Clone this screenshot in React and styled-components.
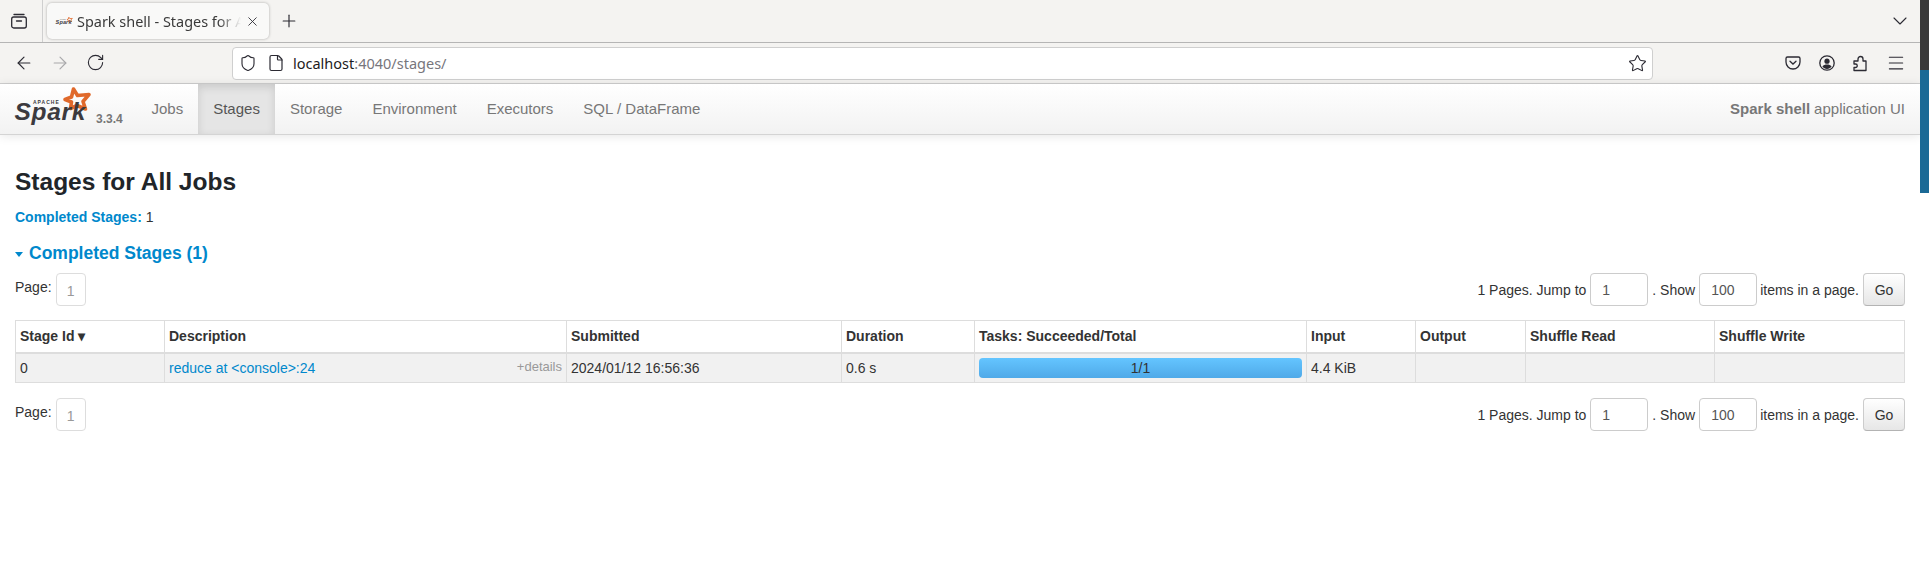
import React from 'react'
import styled, { createGlobalStyle } from 'styled-components'
import {
  ArrowLeft,
  ArrowRight,
  ChevronDown,
  File,
  Menu,
  Plus,
  RotateCw,
  Shield,
  Star,
  X
} from 'lucide-react'

const GlobalStyle = createGlobalStyle`
  html, body {
    margin: 0;
    height: 578px;
    overflow: hidden;
    background: #fff;
  }
  * { box-sizing: border-box; }
`

const Desktop = styled.div`
  display: flex;
  width: 1929px;
  height: 578px;
`

const Browser = styled.div`
  width: 1920px;
  display: flex;
  flex-direction: column;
  color: #2b2a33;
`

const SideStrip = styled.div`
  width: 9px;
  height: 193px;
  background: linear-gradient(to bottom, #3a3a3a 0, #3a3a3a 70px, #1b6a96 70px);
`

const TabStrip = styled.div`
  height: 43px;
  background: #f4f3f1;
  border-bottom: 1px solid #b5b5b5;
  display: flex;
  align-items: center;
`

const ViewButton = styled.div`
  width: 43px;
  height: 42px;
  border-right: 1px solid #cfcfcf;
  display: flex;
  align-items: center;
  justify-content: center;
  padding-right: 4px;
`

const BrowserTab = styled.div`
  width: 222px;
  height: 36px;
  margin-left: 4px;
  padding: 0 9px 0 8px;
  background: #f9f9f8;
  border-radius: 5px;
  box-shadow: 0 0 3px rgba(0, 0, 0, 0.3);
  display: flex;
  align-items: center;
  gap: 4px;
`

const TabTitle = styled.span`
  font: 14.45px 'Noto Sans', sans-serif;
  white-space: nowrap;
  overflow: hidden;
  flex: 1;
  color: #3a3a3a;
  -webkit-mask-image: linear-gradient(to right, #000 86%, transparent 100%);
  mask-image: linear-gradient(to right, #000 86%, transparent 100%);
`

const NewTab = styled.div`
  margin-left: 10px;
  display: flex;
`

const TabSpacer = styled.div`
  flex: 1;
`

const Overflow = styled.div`
  display: flex;
  margin-right: 8px;
`

const Toolbar = styled.div`
  height: 41px;
  background: #f4f3f1;
  border-bottom: 1px solid #cfcfcf;
  display: flex;
  align-items: center;
`

const NavButtons = styled.div`
  width: 232px;
  padding-left: 14px;
  display: flex;
  gap: 16px;
`

const UrlBar = styled.div`
  width: 1421px;
  height: 33px;
  background: #fff;
  border: 1px solid #cfcfcf;
  border-radius: 4px;
  display: flex;
  align-items: center;
  padding: 0 5px 0 6px;
`

const UrlIcons = styled.div`
  display: flex;
  gap: 10px;
  margin-right: 8px;
`

const UrlText = styled.span`
  flex: 1;
  font: 14.5px 'Noto Sans', sans-serif;
  color: #1c1b22;

  & em {
    font-style: normal;
    color: #77767c;
  }
`

const ToolIcons = styled.div`
  flex: 1;
  display: flex;
  justify-content: flex-end;
  align-items: center;
  gap: 18px;
  padding-right: 14px;
`

const Navbar = styled.div`
  height: 51px;
  background: linear-gradient(to bottom, #fff, #f2f2f2);
  border-bottom: 1px solid #d4d4d4;
  box-shadow: 0 1px 10px rgba(0, 0, 0, 0.1);
  display: flex;
  align-items: stretch;
  font: 15px 'Liberation Sans', Arial, sans-serif;
  color: #777;
`

const Brand = styled.div`
  width: 136.5px;
  position: relative;
  flex: none;
`

const Version = styled.span`
  position: absolute;
  left: 96px;
  top: 28px;
  font: bold 12px 'Liberation Sans', Arial, sans-serif;
  color: #777;
`

const NavItem = styled.div`
  padding: 0 15px 2px;
  display: flex;
  align-items: center;
  background: ${({ $active }) => ($active ? '#e5e5e5' : 'transparent')};
  color: ${({ $active }) => ($active ? '#555' : '#777')};
  box-shadow: ${({ $active }) =>
    $active ? 'inset 0 3px 8px rgba(0, 0, 0, 0.125)' : 'none'};
`

const AppName = styled.div`
  margin-left: auto;
  padding-right: 15px;
  padding-bottom: 2px;
  display: flex;
  align-items: center;
  gap: 4px;

  & b {
    font-weight: bold;
  }
`

const Content = styled.div`
  padding: 0 15px;
  font: 14px/20px 'Liberation Sans', Arial, sans-serif;
  color: #333;
`

const Title = styled.h3`
  margin: 32px 0 0;
  font: bold 24.5px/30px 'Liberation Sans', Arial, sans-serif;
  color: #212529;
`

const Summary = styled.div`
  margin-top: 10px;

  & b {
    color: #0088cc;
  }
`

const SectionHeading = styled.div`
  margin-top: 14px;
  height: 24px;
  display: flex;
  align-items: center;
  gap: 6px;
  font: bold 17.5px/24px 'Liberation Sans', Arial, sans-serif;
  color: #0088cc;
`

const Caret = styled.span`
  width: 0;
  height: 0;
  border-left: 4.5px solid transparent;
  border-right: 4.5px solid transparent;
  border-top: 5px solid #0088cc;
  margin-top: 2px;
`

const Pager = styled.div`
  height: 33px;
  margin-top: ${({ $top }) => $top}px;
  display: flex;
  justify-content: space-between;
  align-items: flex-start;
`

const PageLeft = styled.div`
  display: flex;
  gap: 4px;

  & > span {
    line-height: 29px;
  }
`

const PageBox = styled.span`
  width: 30px;
  height: 33px;
  border: 1px solid #ddd;
  border-radius: 4px;
  color: #999;
  display: flex !important;
  align-items: center;
  justify-content: center;
  padding-top: 3px;
`

const PageRight = styled.div`
  display: flex;
  align-items: center;
  gap: 4px;
  height: 33px;
`

const PageInput = styled.div`
  width: 58px;
  height: 33px;
  border: 1px solid #ccc;
  border-radius: 4px;
  padding-left: 11px;
  margin-right: ${({ $tight }) => ($tight ? '-1px' : '0')};
  display: flex;
  align-items: center;
  color: #555;
  background: #fff;
`

const GoButton = styled.div`
  width: 42px;
  height: 33px;
  border: 1px solid #ccc;
  border-bottom-color: #b3b3b3;
  border-radius: 4px;
  background: linear-gradient(to bottom, #fff, #e6e6e6);
  display: flex;
  align-items: center;
  justify-content: center;
  color: #333;
`

const Table = styled.table`
  width: 1889px;
  table-layout: fixed;
  border-collapse: collapse;
  margin-top: 14px;
`

const Col = styled.col`
  width: ${({ $w }) => $w}px;
`

const Th = styled.th`
  height: 32px;
  padding: 0 4px;
  text-align: left;
  font-weight: bold;
  border: 1px solid #ddd;
  border-bottom-width: 2px;
  color: #333;
`

const Td = styled.td`
  height: 30px;
  padding: 0 4px;
  border: 1px solid #ddd;
  background: #f1f1f1;
  white-space: nowrap;
`

const DescCell = styled.div`
  display: flex;
  justify-content: space-between;
  align-items: center;
`

const StageLink = styled.span`
  color: #0088cc;
`

const Details = styled.span`
  font-size: 13px;
  line-height: 16px;
  margin-bottom: 2px;
  color: #999;
`

const Progress = styled.div`
  height: 20px;
  border-radius: 4px;
  background: linear-gradient(to bottom, #64c5ff, #4fa9e8);
  text-align: center;
  line-height: 20px;
  color: #333;
`

const columns = [
  { name: 'Stage Id ▾', width: 149 },
  { name: 'Description', width: 402 },
  { name: 'Submitted', width: 275 },
  { name: 'Duration', width: 133 },
  { name: 'Tasks: Succeeded/Total', width: 332 },
  { name: 'Input', width: 109 },
  { name: 'Output', width: 110 },
  { name: 'Shuffle Read', width: 189 },
  { name: 'Shuffle Write', width: 190 }
]

const navItems = ['Jobs', 'Stages', 'Storage', 'Environment', 'Executors', 'SQL / DataFrame']

// viewBox is the logo area of the navbar, the tab icon crops it to the mark
const SparkLogo = ({ width = 136, height = 50, viewBox = '0 0 136 50' }) => (
  <svg width={width} height={height} viewBox={viewBox}>
    <path
      d="M73.5 5 L77.5 11.5 L89 10.5 L83 17.5 L85.5 25 L77 21.5 L70.5 24.5 L71.5 18 L65 15.5 L71.5 13 Z"
      fill="none"
      stroke="#e0692b"
      strokeWidth="3.6"
      strokeLinejoin="round"
    />
    <text x="33" y="19.5" fontFamily="Liberation Sans" fontWeight="bold" fontSize="5" letterSpacing="1" fill="#3c3a3e">
      APACHE
    </text>
    <text x="14.5" y="36" fontFamily="Liberation Sans" fontWeight="bold" fontStyle="italic" fontSize="24.5" letterSpacing="0.7" fill="#3c3a3e">
      Spark
    </text>
  </svg>
)

const PocketIcon = () => (
  <svg width="16" height="16" viewBox="0 0 16 16" fill="none" stroke="#2b2a33" strokeWidth="1.3">
    <path d="M2.5 2h11A1.5 1.5 0 0 1 15 3.5V7a7 7 0 0 1-14 0V3.5A1.5 1.5 0 0 1 2.5 2z" />
    <path d="M5 6.2l3 2.8 3-2.8" strokeLinecap="round" />
  </svg>
)

const AccountIcon = () => (
  <svg width="16" height="16" viewBox="0 0 16 16">
    <circle cx="8" cy="8" r="7.2" fill="none" stroke="#2b2a33" strokeWidth="1.3" />
    <circle cx="8" cy="6.2" r="2.6" fill="#2b2a33" />
    <path d="M3.4 11.6C4.6 10 6 9.6 8 9.6s3.4.4 4.6 2C11.5 13 9.9 14 8 14s-3.5-1-4.6-2.4z" fill="#2b2a33" />
  </svg>
)

const ExtensionIcon = () => (
  <svg width="15" height="17" viewBox="0 0 15 17" fill="none" stroke="#2b2a33" strokeWidth="1.3" strokeLinejoin="round">
    <path d="M1 6h4V4a2.5 2.5 0 1 1 5 0v2h3v9.5H1v-3h1.5a1.75 1.75 0 0 0 0-3.5H1z" />
  </svg>
)

const ViewIcon = () => (
  <svg width="16" height="16" viewBox="0 0 16 16" fill="none" stroke="#2b2a33" strokeWidth="1.3">
    <path d="M3 1.5h10" strokeLinecap="round" />
    <rect x="0.7" y="4" width="14.6" height="11" rx="2" />
    <path d="M5.5 8h5" strokeLinecap="round" />
  </svg>
)

const Pagination = ({ top }) => (
  <Pager $top={top}>
    <PageLeft>
      <span>Page:</span>
      <PageBox>1</PageBox>
    </PageLeft>
    <PageRight>
      <span>1 Pages. Jump to</span>
      <PageInput>1</PageInput>
      <span>. Show</span>
      <PageInput $tight>100</PageInput>
      <span>items in a page.</span>
      <GoButton>Go</GoButton>
    </PageRight>
  </Pager>
)

export default function App() {
  return (
    <>
      <GlobalStyle />
      <Desktop>
        <Browser>
          <TabStrip>
            <ViewButton>
              <ViewIcon />
            </ViewButton>
            <BrowserTab>
              <SparkLogo width={18} height={16} viewBox="12 2 80 40" />
              <TabTitle>Spark shell - Stages for All Jobs</TabTitle>
              <X size={15} strokeWidth={1.4} />
            </BrowserTab>
            <NewTab>
              <Plus size={20} strokeWidth={1.4} />
            </NewTab>
            <TabSpacer />
            <Overflow>
              <ChevronDown size={24} strokeWidth={1.1} />
            </Overflow>
          </TabStrip>
          <Toolbar>
            <NavButtons>
              <ArrowLeft size={20} strokeWidth={1.4} />
              <ArrowRight size={20} strokeWidth={1.4} color="#a8a8aa" />
              <RotateCw size={19} strokeWidth={1.4} />
            </NavButtons>
            <UrlBar>
              <UrlIcons>
                <Shield size={18} strokeWidth={1.5} />
                <File size={18} strokeWidth={1.6} />
              </UrlIcons>
              <UrlText>
                localhost<em>:4040/stages/</em>
              </UrlText>
              <Star size={19} strokeWidth={1.4} />
            </UrlBar>
            <ToolIcons>
              <PocketIcon />
              <AccountIcon />
              <ExtensionIcon />
              <Menu size={20} strokeWidth={1.3} />
            </ToolIcons>
          </Toolbar>
          <Navbar>
            <Brand>
              <SparkLogo />
              <Version>3.3.4</Version>
            </Brand>
            {navItems.map(item => (
              <NavItem key={item} $active={item === 'Stages'}>
                {item}
              </NavItem>
            ))}
            <AppName>
              <b>Spark shell</b> application UI
            </AppName>
          </Navbar>
          <Content>
            <Title>Stages for All Jobs</Title>
            <Summary>
              <b>Completed Stages:</b> 1
            </Summary>
            <SectionHeading>
              <Caret />
              Completed Stages (1)
            </SectionHeading>
            <Pagination top={8} />
            <Table>
              <colgroup>
                {columns.map(c => (
                  <Col key={c.name} $w={c.width} />
                ))}
              </colgroup>
              <thead>
                <tr>
                  {columns.map(c => (
                    <Th key={c.name}>{c.name}</Th>
                  ))}
                </tr>
              </thead>
              <tbody>
                <tr>
                  <Td>0</Td>
                  <Td>
                    <DescCell>
                      <StageLink>reduce at &lt;console&gt;:24</StageLink>
                      <Details>+details</Details>
                    </DescCell>
                  </Td>
                  <Td>2024/01/12 16:56:36</Td>
                  <Td>0.6 s</Td>
                  <Td>
                    <Progress>1/1</Progress>
                  </Td>
                  <Td>4.4 KiB</Td>
                  <Td />
                  <Td />
                  <Td />
                </tr>
              </tbody>
            </Table>
            <Pagination top={15} />
          </Content>
        </Browser>
        <SideStrip />
      </Desktop>
    </>
  )
}
